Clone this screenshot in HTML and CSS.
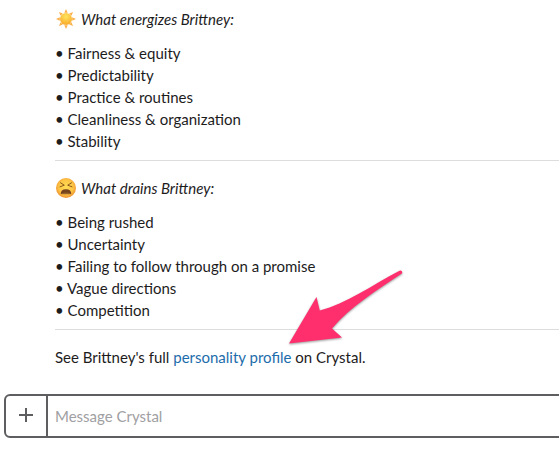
FILE: index.html
```
<!DOCTYPE html>
<html lang="en">
<head>
  <meta charset="UTF-8">
  <title>Crystal</title>
  <link rel="stylesheet" href="styles.css">
</head>
<body>
  <div class="message">
    <section class="block">
      <h2 class="title">
        <svg class="emoji" viewBox="0 0 22 22">
          <defs>
            <radialGradient id="sun" cx="50%" cy="30%" r="70%">
              <stop offset="0" stop-color="#ffe45c"/>
              <stop offset="1" stop-color="#f9a92b"/>
            </radialGradient>
          </defs>
          <path fill="#fbb04a" d="M11 1l1.700 3.800h-3.400zM11 21l1.700-3.800h-3.400zM1 11l3.800-1.700v3.400zM21 11l-3.800-1.700v3.400zM4 4l3.800 1.500-2.300 2.300zM18 4l-1.500 3.800-2.300-2.300zM4 18l1.500-3.800 2.300 2.300zM18 18l-3.800-1.500 2.300-2.300z"/>
          <circle cx="11" cy="11" r="6" fill="url(#sun)"/>
        </svg>
        <em>What energizes Brittney:</em>
      </h2>
      <ul class="list">
        <li>Fairness &amp; equity</li>
        <li>Predictability</li>
        <li>Practice &amp; routines</li>
        <li>Cleanliness &amp; organization</li>
        <li>Stability</li>
      </ul>
    </section>
    <section class="block">
      <h2 class="title">
        <svg class="emoji" viewBox="0 0 22 22">
          <defs>
            <radialGradient id="face" cx="50%" cy="45%" r="55%">
              <stop offset="0" stop-color="#ffdc55"/>
              <stop offset=".65" stop-color="#fdc544"/>
              <stop offset="1" stop-color="#ee9132"/>
            </radialGradient>
          </defs>
          <circle cx="11" cy="11" r="10" fill="url(#face)"/>
          <path fill="none" stroke="#8a5a1c" stroke-width="1" stroke-linecap="round" stroke-linejoin="round" d="M5.500 5.800l3.800 2.400-4.300 1.600M16.500 5.800l-3.800 2.400 4.300 1.600"/>
          <path fill="#74431d" d="M5.800 17.200q-.3-5 5.200-5t5.200 5q-5.200-2-10.400 0z"/>
          <path fill="#94602c" d="M6 16.900q5-2.600 10 0-5 .8-10 0z"/>
        </svg>
        <em>What drains Brittney:</em>
      </h2>
      <ul class="list">
        <li>Being rushed</li>
        <li>Uncertainty</li>
        <li>Failing to follow through on a promise</li>
        <li>Vague directions</li>
        <li>Competition</li>
      </ul>
    </section>
    <p class="footer">See Brittney's full <a class="link" href="#">personality profile</a> on Crystal.</p>
  </div>

  <div class="composer">
    <button class="add" aria-label="Add">
      <svg width="14" height="14" viewBox="0 0 14 14"><path stroke="#5e5d60" stroke-width="2" d="M7 0v14M0 7h14"/></svg>
    </button>
    <div class="input">Message Crystal</div>
  </div>

  <svg class="arrow" viewBox="0 0 118 80">
    <path fill="#ff2f6e" d="M1 74.500L28.500 28l3.300 13.500C58 35 84 16 111.500 1.700q3-.7 2.700 2.600C88 22 62 38 44 59.500l10 9z"/>
  </svg>
</body>
</html>
```
FILE: styles.css
```
body {
  margin: 0;
  height: 450px;
  overflow: hidden;
  position: relative;
  background: #fff;
  color: #1d1c1d;
  font-family: Lato, sans-serif;
  font-size: 15px;
  line-height: 22px;
}

.message {
  height: 394px;
  padding: 8px 0 0 55px;
  box-sizing: border-box;
}

.block {
  height: 152px;
  border-bottom: 1px solid #ddd;
  margin-bottom: 16px;
}

.title {
  display: flex;
  align-items: center;
  gap: 4px;
  height: 22px;
  margin: 0 0 12px;
  font-size: 15px;
  font-weight: normal;
}

.emoji {
  width: 22px;
  height: 22px;
}

.list {
  margin: 0;
  padding: 0;
  list-style: none;
}

.list li::before {
  content: "• ";
}

.footer {
  margin: 0;
}

.link {
  color: #1d6cab;
  text-decoration: none;
}

.composer {
  display: flex;
  width: 570px;
  height: 44px;
  margin-left: 4px;
  box-sizing: border-box;
  border: 2px solid #5e5d60;
  border-radius: 6px;
}

.add {
  display: flex;
  align-items: center;
  justify-content: center;
  width: 42px;
  padding: 0 0 2px;
  border: none;
  border-right: 2px solid #5e5d60;
  background: none;
}

.input {
  padding: 9px 7px;
  color: #a0a0a2;
}

.arrow {
  position: absolute;
  left: 288px;
  top: 269px;
  width: 118px;
  height: 80px;
  filter: drop-shadow(0 1px 1px rgba(0, 0, 0, 0.4));
}
```
